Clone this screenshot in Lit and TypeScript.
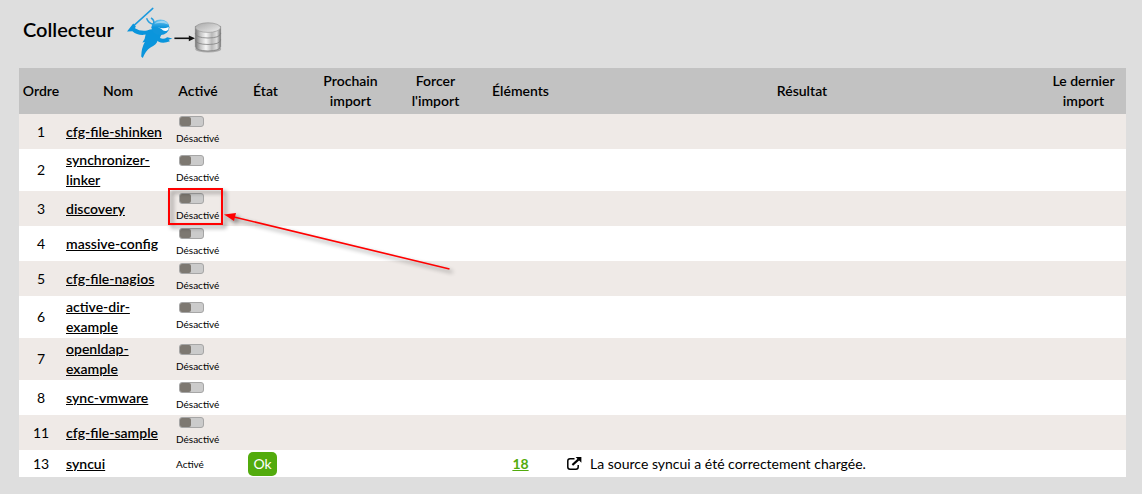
import { LitElement, html, css, svg, nothing } from "lit";
import { customElement, property } from "lit/decorators.js";

interface Source {
  order: number;
  name: string;
  enabled: boolean;
  highlighted?: boolean;
  state?: string;
  items?: number;
  result?: string;
}

const SOURCES: Source[] = [
  { order: 1, name: "cfg-file-shinken", enabled: false },
  { order: 2, name: "synchronizer-linker", enabled: false },
  { order: 3, name: "discovery", enabled: false, highlighted: true },
  { order: 4, name: "massive-config", enabled: false },
  { order: 5, name: "cfg-file-nagios", enabled: false },
  { order: 6, name: "active-dir-example", enabled: false },
  { order: 7, name: "openldap-example", enabled: false },
  { order: 8, name: "sync-vmware", enabled: false },
  { order: 11, name: "cfg-file-sample", enabled: false },
  {
    order: 13,
    name: "syncui",
    enabled: true,
    state: "Ok",
    items: 18,
    result: "La source syncui a été correctement chargée.",
  },
];

@customElement("source-toggle")
class SourceToggle extends LitElement {
  @property() name = "";

  static styles = css`
    :host {
      display: block;
    }
    .toggle {
      display: flex;
      flex-direction: column;
      gap: 3px;
      padding: 0 0 1px;
      font-size: 10px;
      line-height: 16px;
      cursor: pointer;
    }
    .switch {
      appearance: none;
      box-sizing: border-box;
      width: 25px;
      height: 11px;
      margin: 0 3px;
      border: 1px solid #a6a6a6;
      border-radius: 3px;
      background: #cbcbcb;
      cursor: pointer;
    }
    .switch::before {
      content: "";
      display: block;
      width: 11px;
      height: 9px;
      border-radius: 2px;
      background: #7d7871;
    }
    .switch:checked::before {
      margin-left: auto;
      background: #52ab0d;
    }
  `;

  render() {
    return html`<label class="toggle">
      <input class="switch" type="checkbox" aria-label="Activer ${this.name}" />
      <span>Désactivé</span>
    </label>`;
  }
}

@customElement("collector-logo")
class CollectorLogo extends LitElement {
  static styles = css`
    :host {
      display: block;
    }
    .logo {
      display: block;
    }
  `;

  render() {
    return html`<svg class="logo" width="97" height="52" viewBox="127 7 97 52" aria-hidden="true">
      <defs>
        <linearGradient id="metal" x1="0" x2="1">
          <stop offset="0" stop-color="#777" />
          <stop offset="0.2" stop-color="#c4c4c4" />
          <stop offset="0.42" stop-color="#f6f6f6" />
          <stop offset="0.65" stop-color="#b9b9b9" />
          <stop offset="0.85" stop-color="#dedede" />
          <stop offset="1" stop-color="#777" />
        </linearGradient>
        <linearGradient id="lid" x1="0" x2="1" y2="1">
          <stop offset="0" stop-color="#a8a8a8" />
          <stop offset="1" stop-color="#ededed" />
        </linearGradient>
        <linearGradient id="head" x1="0" x2="0" y1="0" y2="1">
          <stop offset="0" stop-color="#6fc3ee" />
          <stop offset="0.5" stop-color="#0f96dc" />
        </linearGradient>
      </defs>
      <path d="M153.8 8.4 L132.6 27.6" stroke="#1c9ade" stroke-width="1.5" stroke-linecap="round" />
      <path
        fill="#0a95dc"
        d="M128 31.6 L134.2 23.4 L136.8 26.2 L136 28.2 Q141 31.6 148 30.6 Q151 28.8 155.5 29 L163 34
           Q161 36.5 161 38 Q164.5 40 168.2 37.2 L173.4 38.6 L169.6 39.8 L171 41.2 Q164 44 159.2 41.4
           L158.6 40.8 Q157.4 45 151.5 47.4 Q146.6 50.6 143.8 58 L142.2 56.4 Q142.4 48 145.8 42
           L143.4 42.6 Q146.4 38.6 146.6 34.6 Q139 36 133.4 31.2 Z"
      />
      <ellipse cx="161.4" cy="27.2" rx="9" ry="7.8" fill="url(#head)" />
      <path d="M155 23.8 Q159 20.4 164 20.8 Q168 21.6 169.2 24.4 Q162 21.8 155 23.8Z" fill="#b9e1f5" opacity="0.7" />
      <path d="M158.4 27 Q164 29.4 169.8 27 L169.4 29.8 Q167 31.8 164.2 30.6 Q163 28.8 158.4 27Z" fill="#fff" />
      <path d="M154.6 24.2 Q149.4 23.6 147.6 18.2 M154.6 23.6 Q155.6 20 152 18" fill="none" stroke="#2b9fdd" stroke-width="1.5" />
      <path d="M175.4 38.3 H191" stroke="#111" stroke-width="1.6" />
      <path d="M189.8 35.4 L196 38.3 L189.8 41.2 Z" fill="#111" />
      <ellipse cx="209.2" cy="49" rx="13" ry="3.6" fill="#aaa" />
      ${[45, 38.5, 32].map(
        (y) => svg`<path
          d="M196.4 ${y - 5.6} V${y + 1.6} Q197 ${y + 5.8} 209 ${y + 6} Q221 ${y + 5.8} 221.6 ${y + 1.6} V${y - 5.6} Z"
          fill="url(#metal)" stroke="#808080" stroke-width="0.8" />`,
      )}
      <ellipse cx="209" cy="27.6" rx="12.5" ry="4.8" fill="url(#lid)" stroke="#999" stroke-width="0.7" />
    </svg>`;
  }
}

@customElement("app-root")
class AppRoot extends LitElement {
  static styles = css`
    :host {
      display: block;
      box-sizing: border-box;
      min-height: 100vh;
      padding: 7px 16px 16px 19px;
      background: #dedede;
      color: #000;
      font: 14px/20px Lato, "Liberation Sans", sans-serif;
    }
    .heading {
      display: flex;
      align-items: flex-start;
      gap: 12px;
      height: 61px;
      padding-left: 4px;
    }
    .title {
      margin: 0;
      padding-top: 10px;
      font-size: 20px;
      line-height: 24px;
      font-weight: 600;
    }
    .sources {
      width: 100%;
      table-layout: fixed;
      border-collapse: collapse;
    }
    .order {
      width: 44px;
    }
    .name {
      width: 110px;
    }
    .active {
      width: 50px;
    }
    .medium {
      width: 85px;
    }
    th {
      box-sizing: border-box;
      height: 46px;
      padding: 0 2px;
      background: #c2c2c2;
      font-weight: 600;
      text-align: center;
    }
    td {
      box-sizing: border-box;
      height: 27px;
      padding: 1px 3px;
      background: #fff;
      vertical-align: middle;
    }
    td.off {
      height: 35px;
    }
    .row:nth-child(odd) td {
      background: #efeae7;
    }
    .centered {
      text-align: center;
    }
    .link {
      color: #000;
      font-weight: 600;
      text-decoration: underline;
    }
    .enabled {
      font-size: 10px;
    }
    .badge {
      display: inline-block;
      margin-right: 6px;
      padding: 2px 5px;
      border-radius: 5px;
      background: #52ab0d;
      color: #fff;
      vertical-align: top;
    }
    .count {
      color: #52ab0d;
      font-weight: 700;
    }
    .result {
      display: flex;
      align-items: center;
      gap: 8px;
      padding-left: 1px;
    }
    .marked {
      position: relative;
    }
    .callout {
      position: absolute;
      z-index: 1;
      top: -8px;
      left: -12px;
      overflow: visible;
      pointer-events: none;
      filter: drop-shadow(3px 3px 2px rgba(0, 0, 0, 0.45));
    }
    .name-cell {
      padding: 1px 3px;
    }
  `;

  private callout() {
    return html`<svg class="callout" width="290" height="92" viewBox="0 0 290 92" aria-hidden="true">
      <rect x="5" y="4" width="53" height="35" fill="none" stroke="#f00" stroke-width="2" />
      <path d="M285.5 84 L70 32" stroke="#f00" stroke-width="1.6" />
      <path d="M60 29.5 L72 28 L70 36 Z" fill="#f00" />
    </svg>`;
  }

  private row(source: Source) {
    return html`<tr class="row">
      <td class="centered">${source.order}</td>
      <td class="name-cell"><a class="link" href="#${source.name}">${source.name}</a></td>
      <td class=${source.enabled ? "enabled" : "off"}>
        ${source.enabled
          ? "Activé"
          : html`<div class="marked">
              <source-toggle .name=${source.name}></source-toggle>
              ${source.highlighted ? this.callout() : nothing}
            </div>`}
      </td>
      <td class="centered">${source.state ? html`<span class="badge">${source.state}</span>` : nothing}</td>
      <td></td>
      <td></td>
      <td class="centered">
        ${source.items ? html`<a class="count" href="#elements">${source.items}</a>` : nothing}
      </td>
      <td>
        ${source.result
          ? html`<div class="result">
              <svg width="15" height="13" viewBox="0 0 15 13" aria-hidden="true">
                <path
                  d="M7.5 1.8 H3 Q0.8 1.8 0.8 4 V10 Q0.8 12.2 3 12.2 H9 Q11.2 12.2 11.2 10 V8"
                  fill="none"
                  stroke="#000"
                  stroke-width="1.5"
                />
                <path d="M5.4 8 L11.6 2.4" stroke="#000" stroke-width="2.2" />
                <path d="M8.6 0 H14.4 V5.8 Z" fill="#000" />
              </svg>
              <span>${source.result}</span>
            </div>`
          : nothing}
      </td>
      <td></td>
    </tr>`;
  }

  render() {
    return html`
      <header class="heading">
        <h1 class="title">Collecteur</h1>
        <collector-logo></collector-logo>
      </header>
      <table class="sources">
        <thead>
          <tr>
            <th class="order">Ordre</th>
            <th class="name">Nom</th>
            <th class="active">Activé</th>
            <th class="medium">État</th>
            <th class="medium">Prochain import</th>
            <th class="medium">Forcer l'import</th>
            <th class="medium">Éléments</th>
            <th>Résultat</th>
            <th class="medium">Le dernier import</th>
          </tr>
        </thead>
        <tbody>
          ${SOURCES.map((source) => this.row(source))}
        </tbody>
      </table>
    `;
  }
}
